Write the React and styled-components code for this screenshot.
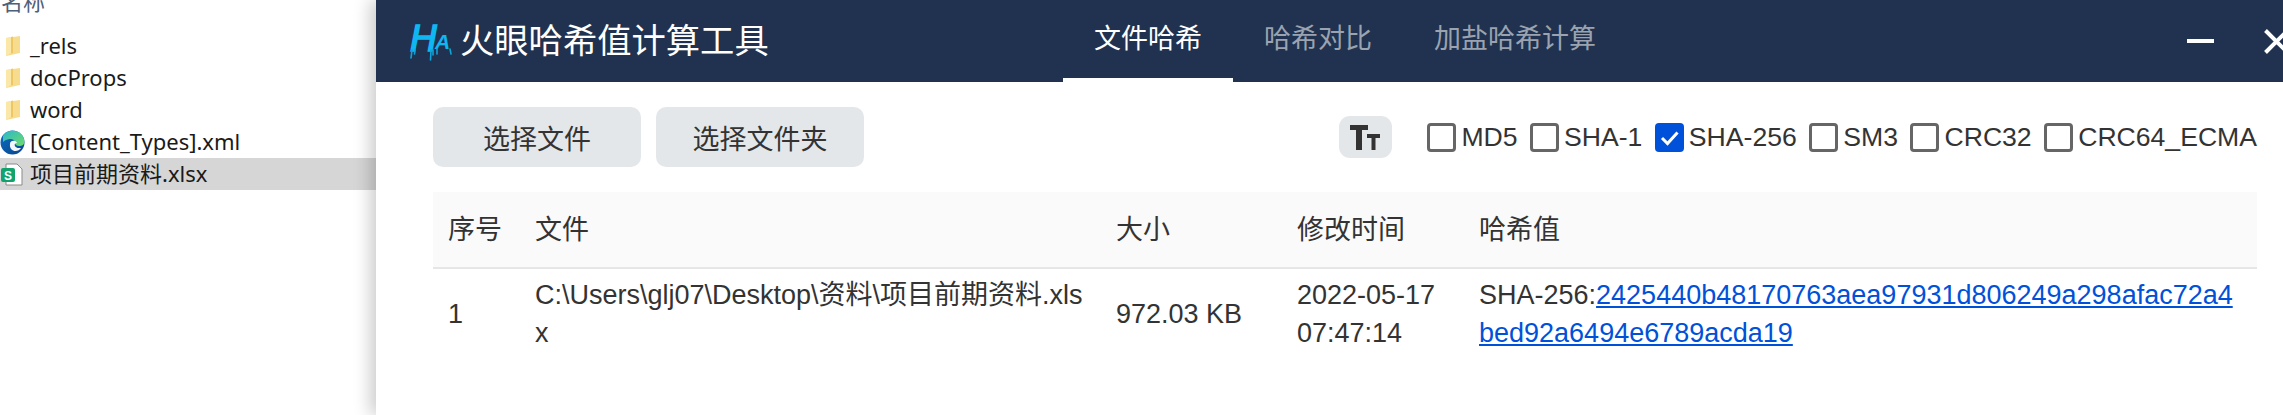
import React from 'react'
import styled, { createGlobalStyle } from 'styled-components'

const sansCjk = `"Liberation Sans", "Noto Sans CJK SC", sans-serif`

const GlobalStyle = createGlobalStyle`
  html, body {
    margin: 0;
    padding: 0;
    background: #fff;
    overflow: hidden;
  }
  * {
    box-sizing: border-box;
  }
`

const Page = styled.div`
  display: flex;
  width: 2283px;
  height: 415px;
  overflow: hidden;
  font-family: ${sansCjk};
  color: #333;
`

const Explorer = styled.div`
  width: 376px;
  flex: none;
  background: #fff;
  overflow: hidden;
`

const ExplorerHead = styled.div`
  height: 30px;
  padding-left: 1px;
  font: 22px/30px "Noto Sans", "Noto Sans CJK SC", sans-serif;
  color: #4c607a;
  margin-top: -14px;
  margin-bottom: 14px;
`

const FileRow = styled.div`
  display: flex;
  align-items: center;
  height: 32px;
  background: ${(p) => (p.$selected ? '#d6d6d6' : 'transparent')};
`

const FileIcon = styled.span`
  display: flex;
  width: 30px;
  flex: none;
  justify-content: ${(p) => (p.$flush ? 'flex-start' : 'center')};
  padding-right: ${(p) => (p.$flush ? '0' : '5px')};
`

const FileName = styled.span`
  padding-bottom: 2px;
  font: 22px/30px "Noto Sans", "Noto Sans CJK SC", sans-serif;
  color: #1a1a1a;
  white-space: nowrap;
`

const Main = styled.div`
  flex: 1;
  min-width: 0;
  background: #fff;
  box-shadow: -6px 0 16px rgba(0, 0, 0, 0.2);
  z-index: 1;
`

const TitleBar = styled.div`
  display: flex;
  align-items: center;
  height: 82px;
  padding-left: 33px;
  background: #20324f;
`

const Logo = styled.svg`
  flex: none;
  width: 44px;
  height: 40px;
`

const AppName = styled.div`
  margin-left: 7px;
  width: 313px;
  font-size: 34.3px;
  line-height: 82px;
  color: #fff;
  white-space: nowrap;
`

const Tabs = styled.div`
  display: flex;
  height: 82px;
  margin-left: 290px;
`

const Tab = styled.div`
  height: 82px;
  padding: 0 31px;
  font-size: 27px;
  line-height: 78px;
  color: ${(p) => (p.$active ? '#fff' : '#9aa3af')};
  border-bottom: 4px solid ${(p) => (p.$active ? '#fff' : 'transparent')};
  white-space: nowrap;
`

const WindowButtons = styled.div`
  display: flex;
  align-items: center;
  gap: 50px;
  margin-left: auto;
  margin-right: -6px;
`

const Content = styled.div`
  padding: 25px 26px 0 57px;
`

const Toolbar = styled.div`
  display: flex;
  align-items: center;
  height: 60px;
  margin-bottom: 25px;
`

const Button = styled.button`
  width: 208px;
  height: 60px;
  margin-right: 15px;
  border: 0;
  border-radius: 10px;
  background: #e4e7ea;
  font-family: inherit;
  font-size: 27px;
  color: #333;
`

const FontToggle = styled.div`
  display: flex;
  align-items: center;
  justify-content: center;
  width: 53px;
  height: 42px;
  margin-left: auto;
  margin-right: 35px;
  border-radius: 11px;
  background: #e4e7ea;
`

const Algorithms = styled.div`
  display: flex;
  align-items: center;
  gap: 12.5px;
`

const Algorithm = styled.label`
  display: flex;
  align-items: center;
  gap: 5px;
  font-size: 26.6px;
  line-height: 30px;
  color: #333;
  white-space: nowrap;
`

const CheckBox = styled.span`
  display: flex;
  align-items: center;
  justify-content: center;
  width: 29px;
  height: 29px;
  border-radius: 4px;
  border: ${(p) => (p.$checked ? '0' : '3px solid #666')};
  background: ${(p) => (p.$checked ? '#0051d9' : '#fff')};
`

const Table = styled.table`
  width: 100%;
  table-layout: fixed;
  border-collapse: collapse;
  font-size: 27px;
  line-height: 38px;
`

const HeadCell = styled.th`
  width: ${(p) => p.$w}px;
  height: 76px;
  padding: 0 15px;
  background: #fafafa;
  border-bottom: 2px solid #e6e6e6;
  text-align: left;
  font-weight: 400;
  font-size: 27px;
  color: #333;
`

const Cell = styled.td`
  padding: 7px 15px;
  color: #333;
  word-break: break-all;
`

const HashLink = styled.a`
  color: #0051d9;
  text-decoration: underline;
`

const FolderIcon = () => (
  <svg width="16" height="22" viewBox="0 0 16 22">
    <path d="M1 3 L15 1 V18 L1 21 Z" fill="#f8dc8d" />
    <path d="M1 3 L6 2 V18 L1 21 Z" fill="#fbe7a8" />
    <path d="M6 2 L8 1.6 V18 L6 18.4 Z" fill="#eec765" />
  </svg>
)

const EdgeIcon = () => (
  <svg width="25" height="25" viewBox="0 0 25 25">
    <defs>
      <linearGradient id="edgeBlue" x1="0" y1="0" x2="0.7" y2="1">
        <stop offset="0" stopColor="#0d6fc4" />
        <stop offset="1" stopColor="#0a4a94" />
      </linearGradient>
      <linearGradient id="edgeGreen" x1="0" y1="0" x2="1" y2="1">
        <stop offset="0" stopColor="#2bb8c9" />
        <stop offset="1" stopColor="#6fdc6a" />
      </linearGradient>
    </defs>
    <circle cx="12.5" cy="12.5" r="12" fill="url(#edgeBlue)" />
    <path d="M3 6 C6 0 16 -1 21 4 C25 8 25 13 23 15 C20 17 15 16 15 13 C15 9 9 7 3 12 Z" fill="url(#edgeGreen)" />
    <path d="M10 14 C10 10 16 10 17 13 C13 13 14 19 21 18 C18 23 9 22 10 14 Z" fill="#fff" opacity="0.95" />
  </svg>
)

const SheetIcon = () => (
  <svg width="23" height="23" viewBox="0 0 23 23">
    <path d="M6 1 H17 L22 6 V22 H6 Z" fill="#fff" stroke="#8a8a8a" />
    <rect x="1" y="5" width="14" height="14" rx="2" fill="#12a36c" />
    <text x="8" y="16.5" fontSize="12" fontWeight="700" fill="#fff" textAnchor="middle" fontFamily="Liberation Sans">S</text>
  </svg>
)

const HaLogo = () => (
  <Logo viewBox="0 0 44 40">
    <text x="1" y="30" fontSize="37" fontStyle="italic" fill="#0fb6f2" stroke="#0fb6f2" strokeWidth="1.6" fontFamily="Liberation Sans">H</text>
    <text x="26" y="28" fontSize="21" fontStyle="italic" fontWeight="700" fill="#0fb6f2" fontFamily="Liberation Sans">A</text>
    <g stroke="#0fa3da" strokeWidth="1.6" strokeLinecap="round">
      <line x1="3" y1="29" x2="2" y2="37" />
      <line x1="6" y1="29" x2="5.5" y2="33" />
      <line x1="22" y1="29" x2="21.5" y2="39" />
      <line x1="24" y1="29" x2="24" y2="34" />
      <line x1="28" y1="28" x2="28" y2="33" />
      <line x1="41" y1="28" x2="42" y2="33" />
    </g>
  </Logo>
)

const TextSizeIcon = () => (
  <svg width="31" height="25" viewBox="0 0 31 25" fill="#333">
    <rect x="0" y="0" width="18" height="5" />
    <rect x="6" y="0" width="6" height="25" />
    <rect x="17" y="9" width="13" height="4" />
    <rect x="21.5" y="9" width="4" height="16" />
  </svg>
)

const MinimizeIcon = () => (
  <svg width="27" height="4" viewBox="0 0 27 4">
    <rect width="27" height="4" fill="#fff" />
  </svg>
)

const CloseIcon = () => (
  <svg width="25" height="25" viewBox="0 0 25 25">
    <path d="M1.5 1.5 L23.5 23.5 M23.5 1.5 L1.5 23.5" stroke="#fff" strokeWidth="4" />
  </svg>
)

const CheckMark = () => (
  <svg width="21" height="21" viewBox="0 0 21 21">
    <path d="M3 11 L8.5 16.5 L18.5 5.5" fill="none" stroke="#fff" strokeWidth="3" />
  </svg>
)

const entries = [
  { name: '_rels', icon: <FolderIcon /> },
  { name: 'docProps', icon: <FolderIcon /> },
  { name: 'word', icon: <FolderIcon /> },
  { name: '[Content_Types].xml', icon: <EdgeIcon />, flush: true },
  { name: '项目前期资料.xlsx', icon: <SheetIcon />, flush: true, selected: true },
]

const algorithms = [
  { name: 'MD5' },
  { name: 'SHA-1' },
  { name: 'SHA-256', checked: true },
  { name: 'SM3' },
  { name: 'CRC32' },
  { name: 'CRC64_ECMA' },
]

const columns = [
  { title: '序号', w: 87 },
  { title: '文件', w: 581 },
  { title: '大小', w: 181 },
  { title: '修改时间', w: 182 },
  { title: '哈希值', w: 793 },
]

const App = () => {
  return (
    <Page>
      <GlobalStyle />
      <Explorer>
        <ExplorerHead>名称</ExplorerHead>
        {entries.map((entry) => (
          <FileRow key={entry.name} $selected={entry.selected}>
            <FileIcon $flush={entry.flush}>{entry.icon}</FileIcon>
            <FileName>{entry.name}</FileName>
          </FileRow>
        ))}
      </Explorer>
      <Main>
        <TitleBar>
          <HaLogo />
          <AppName>火眼哈希值计算工具</AppName>
          <Tabs>
            <Tab $active>文件哈希</Tab>
            <Tab>哈希对比</Tab>
            <Tab>加盐哈希计算</Tab>
          </Tabs>
          <WindowButtons>
            <MinimizeIcon />
            <CloseIcon />
          </WindowButtons>
        </TitleBar>
        <Content>
          <Toolbar>
            <Button>选择文件</Button>
            <Button>选择文件夹</Button>
            <FontToggle>
              <TextSizeIcon />
            </FontToggle>
            <Algorithms>
              {algorithms.map((algo) => (
                <Algorithm key={algo.name}>
                  <CheckBox $checked={algo.checked}>{algo.checked && <CheckMark />}</CheckBox>
                  {algo.name}
                </Algorithm>
              ))}
            </Algorithms>
          </Toolbar>
          <Table>
            <thead>
              <tr>
                {columns.map((col) => (
                  <HeadCell key={col.title} $w={col.w}>{col.title}</HeadCell>
                ))}
              </tr>
            </thead>
            <tbody>
              <tr>
                <Cell>1</Cell>
                <Cell>C:\Users\glj07\Desktop\资料\项目前期资料.xlsx</Cell>
                <Cell>972.03 KB</Cell>
                <Cell>2022-05-17 07:47:14</Cell>
                <Cell>
                  SHA-256:<HashLink href="#">2425440b48170763aea97931d806249a298afac72a4bed92a6494e6789acda19</HashLink>
                </Cell>
              </tr>
            </tbody>
          </Table>
        </Content>
      </Main>
    </Page>
  )
}

export default App
